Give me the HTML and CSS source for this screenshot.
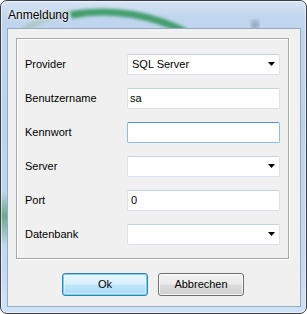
FILE: index.html
```html
<!DOCTYPE html>
<html>
<head>
<meta charset="utf-8">
<link rel="stylesheet" href="styles.css">
</head>
<body>
<div class="window">
  <div class="titlebar">
    <svg class="wallpaper" width="305" height="27" viewBox="0 0 305 27">
      <defs>
        <filter id="blur" x="-20%" y="-80%" width="140%" height="260%"><feGaussianBlur stdDeviation="1.8"/></filter>
        <filter id="blur2"><feGaussianBlur stdDeviation="2.5"/></filter>
      </defs>
      <path d="M22 30 C 40 16, 60 12, 82 12" stroke="#9cbfa6" stroke-width="6" fill="none" opacity="0.55" filter="url(#blur)"/>
      <path d="M70 14 C 110 6, 155 14, 190 34" stroke="#2e9458" stroke-width="7" fill="none" opacity="0.85" filter="url(#blur)"/>
      <ellipse cx="254" cy="24" rx="4" ry="5" fill="#7f8d9a" opacity="0.7" filter="url(#blur2)"/>
    </svg>
    <span class="title">Anmeldung</span>
  </div>
  <div class="client">
    <div class="group">
      <div class="row"><span class="label">Provider</span><div class="field combo"><span>SQL Server</span><svg class="arrow" width="7" height="4" viewBox="0 0 7 4"><path d="M0 0H7L3.5 4Z" fill="#000"/></svg></div></div>
      <div class="row"><span class="label">Benutzername</span><div class="field text"><span>sa</span></div></div>
      <div class="row"><span class="label">Kennwort</span><div class="field text hot"></div></div>
      <div class="row"><span class="label">Server</span><div class="field combo"><span></span><svg class="arrow" width="7" height="4" viewBox="0 0 7 4"><path d="M0 0H7L3.5 4Z" fill="#000"/></svg></div></div>
      <div class="row"><span class="label">Port</span><div class="field text"><span class="num">0</span></div></div>
      <div class="row"><span class="label">Datenbank</span><div class="field combo"><span></span><svg class="arrow" width="7" height="4" viewBox="0 0 7 4"><path d="M0 0H7L3.5 4Z" fill="#000"/></svg></div></div>
    </div>
    <div class="buttons">
      <div class="btn default">Ok</div>
      <div class="btn">Abbrechen</div>
    </div>
  </div>
</div>
</body>
</html>
```
FILE: styles.css
```css
* { box-sizing: border-box; }
html, body { margin: 0; padding: 0; background: #ffffff; }
body { width: 307px; height: 314px; overflow: hidden; font-family: "Liberation Sans", Arial, sans-serif; }

.window {
  width: 307px;
  height: 314px;
  border: 1px solid #3b3f45;
  border-radius: 7px;
  background:
    linear-gradient(to bottom, rgba(70,150,95,0) 190px, rgba(70,150,95,0.7) 215px, rgba(70,150,95,0) 245px) left top / 6px 100% no-repeat,
    linear-gradient(to bottom, #c0d6ee 0%, #bcd3ec 40%, #c3d9f1 85%, #cfe2f7 100%);
  box-shadow: inset 0 0 0 1px rgba(255,255,255,0.55);
  padding: 0 6px 6px 6px;
  display: flex;
  flex-direction: column;
  overflow: hidden;
}

.titlebar {
  position: relative;
  height: 27px;
  margin: 0 -6px;
  padding-left: 7px;
  display: flex;
  align-items: center;
  background: linear-gradient(to bottom, rgba(255,255,255,0.35), rgba(255,255,255,0) 60%);
}
.wallpaper { position: absolute; left: 0; top: 0; }
.title {
  position: relative;
  font-size: 12px;
  color: #000;
  padding-top: 2px;
  text-shadow: 0 0 4px rgba(255,255,255,0.9), 0 0 2px rgba(255,255,255,0.9);
}

.client {
  width: 294px;
  height: 280px;
  border: 1px solid #95a9c1;
  background: #f0f0f0;
  padding: 9px 0 0 8px;
}

.group {
  width: 273px;
  height: 221px;
  border: 1px solid #a7a7a7;
  box-shadow: inset 1px 1px 0 #ffffff, 1px 1px 0 #ffffff;
  padding: 15px 0 0 8px;
  display: flex;
  flex-direction: column;
  gap: 13px;
}

.row {
  display: flex;
  align-items: center;
  height: 21px;
}
.label {
  width: 102px;
  font-size: 11px;
  color: #000;
}

.field {
  width: 153px;
  height: 21px;
  background: #fff;
  border: 1px solid #dbe2ea;
  border-top-color: #c9d1da;
  border-radius: 2px;
  display: flex;
  align-items: center;
  font-size: 11px;
  color: #000;
}
.field.text { padding-left: 2px; }
.field.combo { padding-left: 4px; padding-right: 4px; justify-content: space-between; }
.field.hot { border-color: #8fbbe4; border-top-color: #5a93c9; }
.num { padding-left: 1px; }
.arrow { display: block; }

.buttons {
  display: flex;
  gap: 10px;
  margin-top: 14px;
  padding-left: 46px;
}
.btn {
  width: 86px;
  height: 23px;
  border: 1px solid #707070;
  border-radius: 3px;
  display: flex;
  align-items: center;
  justify-content: center;
  font-size: 11px;
  color: #000;
  background: linear-gradient(to bottom, #f2f2f2 0%, #ebebeb 48%, #dddddd 52%, #cfcfcf 100%);
  box-shadow: inset 0 0 0 1px rgba(255,255,255,0.8);
}
.btn.default {
  border-color: #3c7fb1;
  background: linear-gradient(to bottom, #eaf6fd 0%, #d9f0fc 48%, #bee6fd 52%, #a7d9f5 100%);
  box-shadow: inset 0 0 0 1px #6fd0f7, inset 0 0 0 2px rgba(255,255,255,0.4);
}
```
